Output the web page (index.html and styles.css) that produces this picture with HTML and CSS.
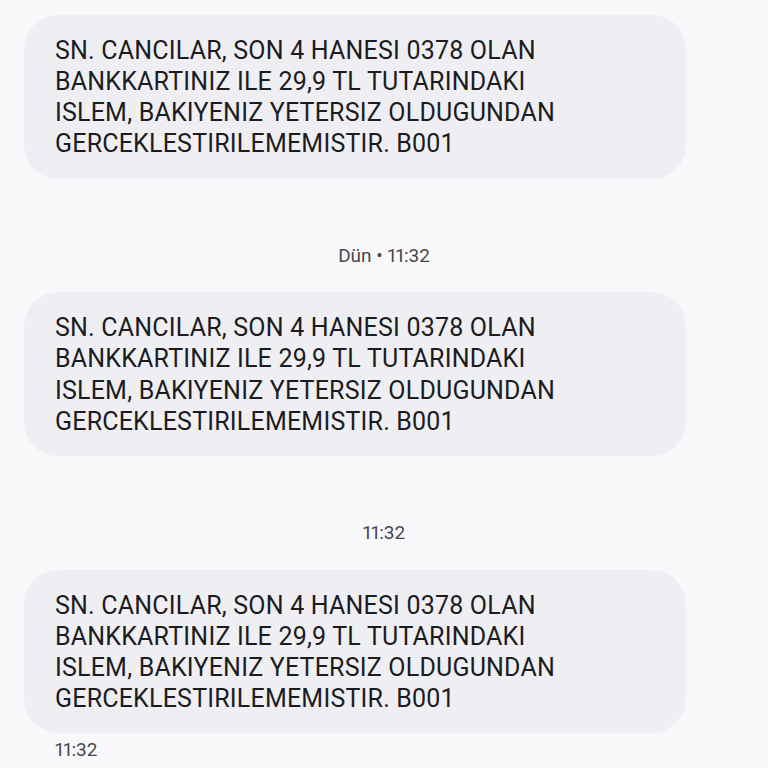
FILE: index.html
```html
<!DOCTYPE html>
<html lang="tr">
<head>
<meta charset="utf-8">
<link rel="stylesheet" href="styles.css">
</head>
<body>
<div class="thread">
  <div class="bubble">SN. CANCILAR, SON 4 HANESI 0378 OLAN BANKKARTINIZ ILE 29,9 TL TUTARINDAKI ISLEM, BAKIYENIZ YETERSIZ OLDUGUNDAN GERCEKLESTIRILEMEMISTIR. B001</div>
  <div class="stamp">Dün • 11:32</div>
  <div class="bubble">SN. CANCILAR, SON 4 HANESI 0378 OLAN BANKKARTINIZ ILE 29,9 TL TUTARINDAKI ISLEM, BAKIYENIZ YETERSIZ OLDUGUNDAN GERCEKLESTIRILEMEMISTIR. B001</div>
  <div class="stamp">11:32</div>
  <div class="bubble">SN. CANCILAR, SON 4 HANESI 0378 OLAN BANKKARTINIZ ILE 29,9 TL TUTARINDAKI ISLEM, BAKIYENIZ YETERSIZ OLDUGUNDAN GERCEKLESTIRILEMEMISTIR. B001</div>
  <div class="time">11:32</div>
</div>
</body>
</html>
```
FILE: styles.css
```css
html, body {
  margin: 0;
  padding: 0;
  background: #f9f9fb;
}
body {
  width: 768px;
  height: 768px;
  overflow: hidden;
  font-family: Roboto, "Noto Sans", sans-serif;
}
.thread {
  padding: 15px 0 0 24px;
  display: flex;
  flex-direction: column;
  align-items: flex-start;
}
.bubble {
  box-sizing: border-box;
  width: 662px;
  height: 163.5px;
  padding: 19.6px 90px 0 31px;
  background: #efeff3;
  border-radius: 34px;
  color: #1c1c1e;
  font-size: 25px;
  line-height: 31.3px;
  letter-spacing: 0.2px;
}
.stamp {
  width: 720px;
  text-align: center;
  color: #48484a;
  font-size: 19px;
  line-height: 24px;
  margin: 65.3px 0 24.7px;
  font-variant-numeric: proportional-nums;
}
.time {
  margin: 5px 0 0 31px;
  color: #48484a;
  font-size: 19px;
  line-height: 24px;
  font-variant-numeric: proportional-nums;
}
```
